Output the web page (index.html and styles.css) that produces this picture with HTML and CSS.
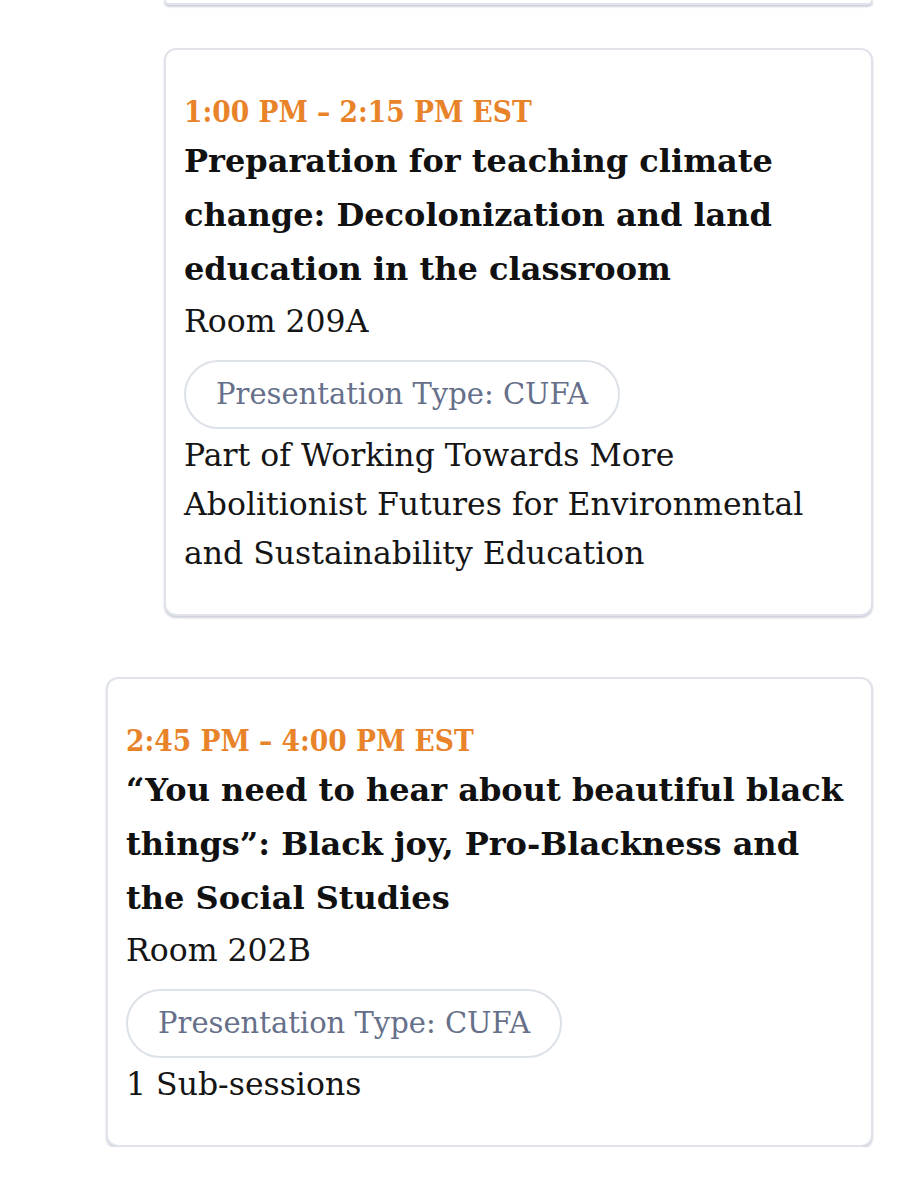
FILE: index.html
```html
<!DOCTYPE html>
<html lang="en">
<head>
<meta charset="utf-8">
<title>Sessions</title>
<link rel="stylesheet" href="styles.css">
</head>
<body>
<main class="sessions">
  <div class="sub-list">
    <div class="card card--cut"></div>
    <article class="card">
      <div class="time">1:00 PM – 2:15 PM EST</div>
      <h2 class="title">Preparation for teaching climate change: Decolonization and land education in the classroom</h2>
      <div class="room">Room 209A</div>
      <span class="pill">Presentation Type: CUFA</span>
      <p class="desc">Part of Working Towards More Abolitionist Futures for Environmental and Sustainability Education</p>
    </article>
  </div>
  <article class="card">
    <div class="time">2:45 PM – 4:00 PM EST</div>
    <h2 class="title">“You need to hear about beautiful black things”: Black joy, Pro-Blackness and the Social Studies</h2>
    <div class="room">Room 202B</div>
    <span class="pill">Presentation Type: CUFA</span>
    <p class="desc">1 Sub-sessions</p>
  </article>
</main>
</body>
</html>
```
FILE: styles.css
```css
html, body {
  margin: 0;
  background: #ffffff;
}
body {
  font-family: "DejaVu Serif", "Liberation Serif", serif;
  color: #151515;
}
.sessions {
  display: flex;
  flex-direction: column;
  gap: 61px;
  padding: 0 45px 0 106px;
}
.sub-list {
  display: flex;
  flex-direction: column;
  gap: 43px;
  padding-left: 58px;
}
.card {
  border: 2px solid #e0e3ea;
  border-radius: 12px;
  background: #fff;
  box-shadow: 0 2px 2px rgba(165, 172, 190, 0.55);
  padding: 40px 18px 36px;
  display: flex;
  flex-direction: column;
  align-items: flex-start;
}
.card--cut {
  border-top: none;
  border-radius: 0 0 12px 12px;
  padding: 0;
  height: 3px;
}
.time {
  font-family: "DejaVu Serif Condensed", "DejaVu Serif", serif;
  font-stretch: condensed;
  font-weight: 700;
  font-size: 29.5px;
  line-height: 44px;
  color: #e8832a;
}
.title {
  margin: 0;
  font-weight: 700;
  font-size: 32px;
  line-height: 54px;
  color: #111;
}
.room {
  margin-top: 4px;
  font-size: 31.5px;
  line-height: 42px;
}
.pill {
  margin-top: 18px;
  border: 2px solid #dde1e8;
  border-radius: 36px;
  padding: 0 30px;
  height: 65px;
  line-height: 65px;
  font-size: 29px;
  color: #66708a;
}
.desc {
  margin: 2px 0 0;
  font-size: 31.5px;
  line-height: 49px;
}
```
